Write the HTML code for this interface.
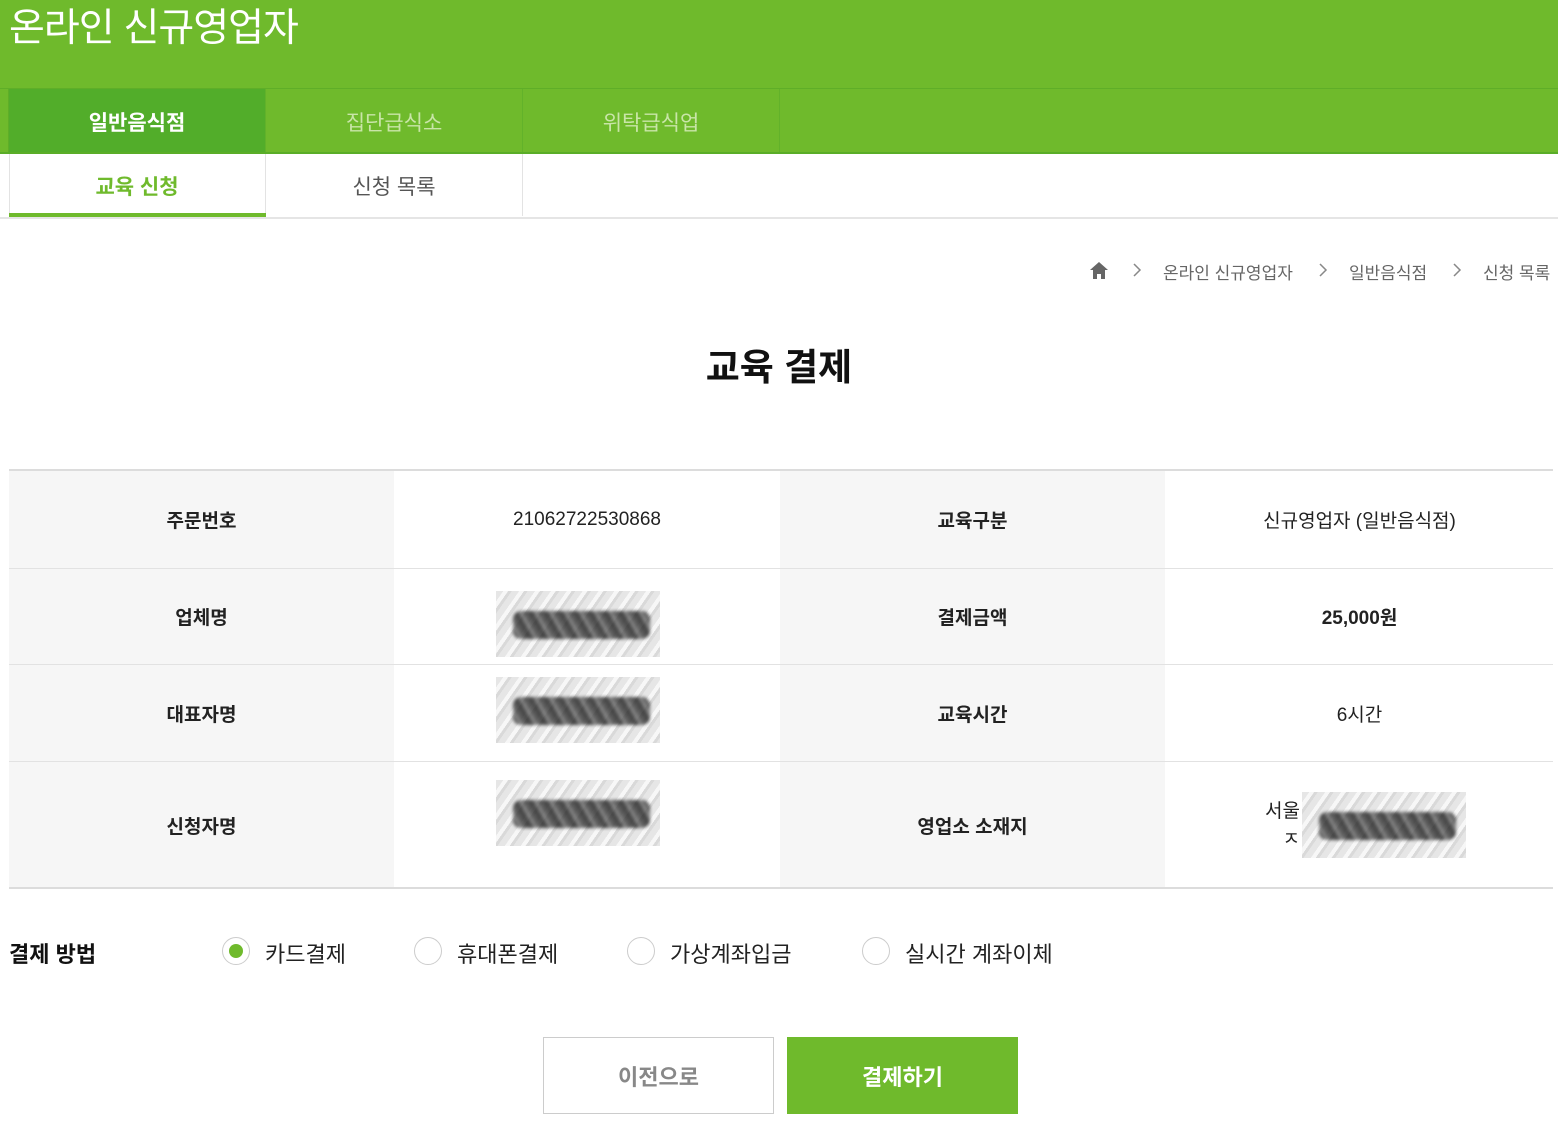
<!DOCTYPE html>
<html><head><meta charset="utf-8"><style>
*{margin:0;padding:0;box-sizing:border-box}
body{width:1558px;height:1125px;background:#fff;font-family:"Liberation Sans","Noto Sans CJK KR",sans-serif;position:relative;overflow:hidden;color:#222}
.a{position:absolute}
.hdr{left:0;top:0;width:1558px;height:154px;background:#6fba2c}
.title{left:9px;top:3px;font-size:39px;color:#fff;line-height:52px;letter-spacing:-1px}
.tabline{left:0;top:88px;width:1558px;height:1px;background:#5fae28}
.tabbot{left:0;top:152px;width:1558px;height:2px;background:#5aad28}
.tab{top:89px;height:64px;width:257px;line-height:70px;text-align:center;font-size:21px;color:#c9e5a8;border-right:1px solid #62b22a}
.sub{top:154px;height:62px;width:257px;line-height:68px;text-align:center;font-size:21px;color:#555;border-right:1px solid #e3e3e3}
.crumb{top:259px;font-size:17px;color:#666}
.chev{top:259px;font-size:17px;color:#888;transform:scaleY(1.2)}
.lbl{background:#f6f6f6;font-weight:bold;font-size:19px;text-align:center;display:flex;align-items:center;justify-content:center;width:385px}
.val{font-size:19px;display:flex;align-items:center;justify-content:center;width:386px;background:#fff}
.hl{left:9px;width:1544px;height:1px;background:#e2e2e2}
.blur{width:164px;height:66px;background:repeating-linear-gradient(125deg,#e6e6e6 0 6px,#f7f7f7 6px 10px,#d9d9d9 10px 13px)}
.blur::after{content:"";position:absolute;left:17px;top:20px;width:137px;height:28px;border-radius:8px;background:repeating-linear-gradient(60deg,#222 0 5px,#666 5px 9px,#3a3a3a 9px 13px);filter:blur(1.5px);opacity:.8}
.radio{width:28px;height:28px;border:1px solid #ccc;border-radius:50%;top:937px}
.rl{top:937px;font-size:22px;color:#222}
</style></head><body>
<div class="a hdr"></div>
<div class="a title">온라인 신규영업자</div>
<div class="a tabline"></div>
<div class="a" style="left:0;top:89px;width:9px;height:64px;background:#6fba2c;border-right:1px solid #5fae28"></div>
<div class="a tab" style="left:9px;background:#52ad2a;color:#fff;font-weight:bold">일반음식점</div>
<div class="a tab" style="left:266px">집단급식소</div>
<div class="a tab" style="left:523px">위탁급식업</div>
<div class="a tabbot"></div>
<div class="a" style="left:9px;top:154px;width:1px;height:64px;background:#e3e3e3"></div>
<div class="a sub" style="left:9px;color:#6fba2c;font-weight:bold">교육 신청</div>
<div class="a sub" style="left:266px">신청 목록</div>
<div class="a" style="left:9px;top:213px;width:257px;height:5px;background:#6fba2c"></div>
<div class="a" style="left:0;top:217px;width:1558px;height:2px;background:#e5e5e5"></div>

<svg class="a" style="left:1089px;top:261px" width="20" height="19" viewBox="0 0 20 19"><path d="M10 1 L19 9 H16 V18 H12 V13 H8 V18 H4 V9 H1 Z" fill="#666"/></svg>
<svg class="a" style="left:1132px;top:263px" width="10" height="14" viewBox="0 0 10 14"><path d="M2 1 L8 7 L2 13" fill="none" stroke="#888" stroke-width="1.5"/></svg>
<div class="a crumb" style="left:1163px">온라인 신규영업자</div>
<svg class="a" style="left:1318px;top:263px" width="10" height="14" viewBox="0 0 10 14"><path d="M2 1 L8 7 L2 13" fill="none" stroke="#888" stroke-width="1.5"/></svg>
<div class="a crumb" style="left:1349px">일반음식점</div>
<svg class="a" style="left:1452px;top:263px" width="10" height="14" viewBox="0 0 10 14"><path d="M2 1 L8 7 L2 13" fill="none" stroke="#888" stroke-width="1.5"/></svg>
<div class="a crumb" style="left:1483px">신청 목록</div>

<div class="a" style="left:0;top:337px;width:1558px;text-align:center;font-size:37px;font-weight:bold;color:#111">교육 결제</div>

<div class="a" style="left:9px;top:469px;width:1544px;height:2px;background:#dcdcdc"></div>
<div class="a lbl" style="left:9px;top:471px;height:97px">주문번호</div>
<div class="a val" style="left:394px;top:471px;height:97px">21062722530868</div>
<div class="a lbl" style="left:780px;top:471px;height:97px">교육구분</div>
<div class="a val" style="left:1166px;top:471px;height:97px;width:387px">신규영업자 (일반음식점)</div>
<div class="a hl" style="top:568px"></div>
<div class="a lbl" style="left:9px;top:569px;height:95px">업체명</div>
<div class="a lbl" style="left:780px;top:569px;height:95px">결제금액</div>
<div class="a val" style="left:1166px;top:569px;height:95px;width:387px;font-weight:bold">25,000원</div>
<div class="a hl" style="top:664px"></div>
<div class="a lbl" style="left:9px;top:665px;height:96px">대표자명</div>
<div class="a lbl" style="left:780px;top:665px;height:96px">교육시간</div>
<div class="a val" style="left:1166px;top:665px;height:96px;width:387px">6시간</div>
<div class="a hl" style="top:761px"></div>
<div class="a lbl" style="left:9px;top:762px;height:126px">신청자명</div>
<div class="a lbl" style="left:780px;top:762px;height:126px">영업소 소재지</div>
<div class="a" style="left:9px;top:887px;width:1544px;height:2px;background:#dcdcdc"></div>
<div class="a blur" style="left:496px;top:591px"></div>
<div class="a blur" style="left:496px;top:677px"></div>
<div class="a blur" style="left:496px;top:780px"></div>
<div class="a blur" style="left:1302px;top:792px"></div>
<div class="a" style="left:1258px;top:798px;font-size:19px;line-height:28px;text-align:right;width:42px">서울<br>ㅈ</div>

<div class="a" style="left:9px;top:937px;font-size:22px;font-weight:bold;color:#111">결제 방법</div>
<div class="a radio" style="left:222px"></div>
<div class="a" style="left:229px;top:944px;width:14px;height:14px;border-radius:50%;background:#6fba2c"></div>
<div class="a rl" style="left:265px">카드결제</div>
<div class="a radio" style="left:414px"></div>
<div class="a rl" style="left:457px">휴대폰결제</div>
<div class="a radio" style="left:627px"></div>
<div class="a rl" style="left:670px">가상계좌입금</div>
<div class="a radio" style="left:862px"></div>
<div class="a rl" style="left:905px">실시간 계좌이체</div>

<div class="a" style="left:543px;top:1037px;width:231px;height:77px;border:1px solid #ccc;text-align:center;line-height:80px;font-size:22px;font-weight:bold;color:#888">이전으로</div>
<div class="a" style="left:787px;top:1037px;width:231px;height:77px;background:#6fba2c;text-align:center;line-height:81px;font-size:22px;font-weight:bold;color:#fff">결제하기</div>
</body></html>
